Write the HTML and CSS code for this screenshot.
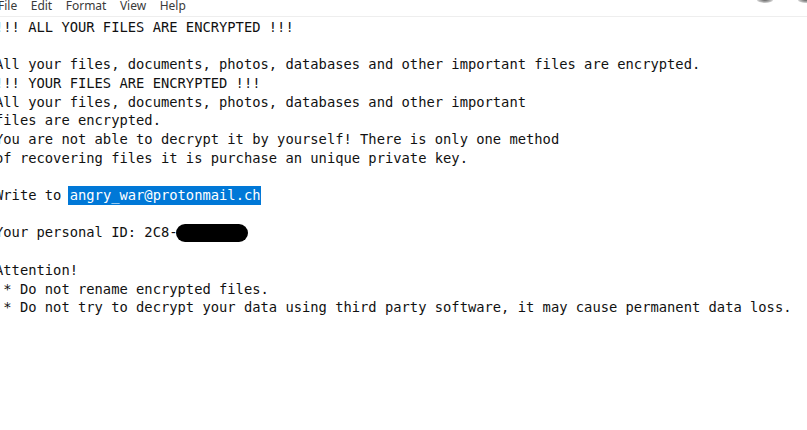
FILE: index.html
```html
<!DOCTYPE html>
<html>
<head>
<meta charset="utf-8">
<link rel="stylesheet" href="styles.css">
</head>
<body>
<div class="window">
  <div class="menubar">
    <span class="menu-item">File</span>
    <span class="menu-item">Edit</span>
    <span class="menu-item">Format</span>
    <span class="menu-item">View</span>
    <span class="menu-item">Help</span>
  </div>
  <div class="ctrl ctrl-a"></div>
  <div class="ctrl ctrl-b"></div>
  <pre class="editor">!!! ALL YOUR FILES ARE ENCRYPTED !!!

All your files, documents, photos, databases and other important files are encrypted.
!!! YOUR FILES ARE ENCRYPTED !!!
All your files, documents, photos, databases and other important
files are encrypted.
You are not able to decrypt it by yourself! There is only one method
of recovering files it is purchase an unique private key.

Write to <span class="sel">angry_war@protonmail.ch</span>

Your personal ID: 2C8-<span class="redact"></span>

Attention!
 * Do not rename encrypted files.
 * Do not try to decrypt your data using third party software, it may cause permanent data loss.</pre>
</div>
</body>
</html>
```
FILE: styles.css
```css
html, body {
  margin: 0;
  padding: 0;
  background: #fff;
  overflow: hidden;
}
.window {
  position: relative;
  width: 807px;
  height: 430px;
  background: #fff;
  overflow: hidden;
}
.menubar {
  display: flex;
  gap: 13.5px;
  height: 16px;
  border-bottom: 1px solid #eeeeee;
  margin-left: -2px;
}
.menu-item {
  font-family: "Noto Sans", "Open Sans", sans-serif;
  font-size: 12px;
  line-height: 16px;
  color: #3a3a3a;
  margin-top: -2px;
}
.ctrl {
  position: absolute;
  top: -3px;
  height: 6px;
  border-radius: 50%;
  background: radial-gradient(ellipse at center, rgba(60,60,60,0.8) 0%, rgba(60,60,60,0.3) 60%, rgba(60,60,60,0) 100%);
}
.ctrl-a { left: 757px; width: 16px; }
.ctrl-b { left: 798px; width: 16px; }
.editor {
  margin: 0 0 0 -5px;
  padding: 1px 0 0 0;
  font-family: "DejaVu Sans Mono", "Liberation Mono", monospace;
  font-size: 13.79px;
  line-height: 18.67px;
  color: #111;
  white-space: pre;
}
.sel {
  background: #0078d7;
  color: #fff;
  padding: 1px 0 2px 2px;
  margin-left: -2px;
}
.redact {
  display: inline-block;
  width: 72px;
  height: 18px;
  margin-left: -2px;
  background: #000;
  border-radius: 9px;
  vertical-align: -5px;
}
```
